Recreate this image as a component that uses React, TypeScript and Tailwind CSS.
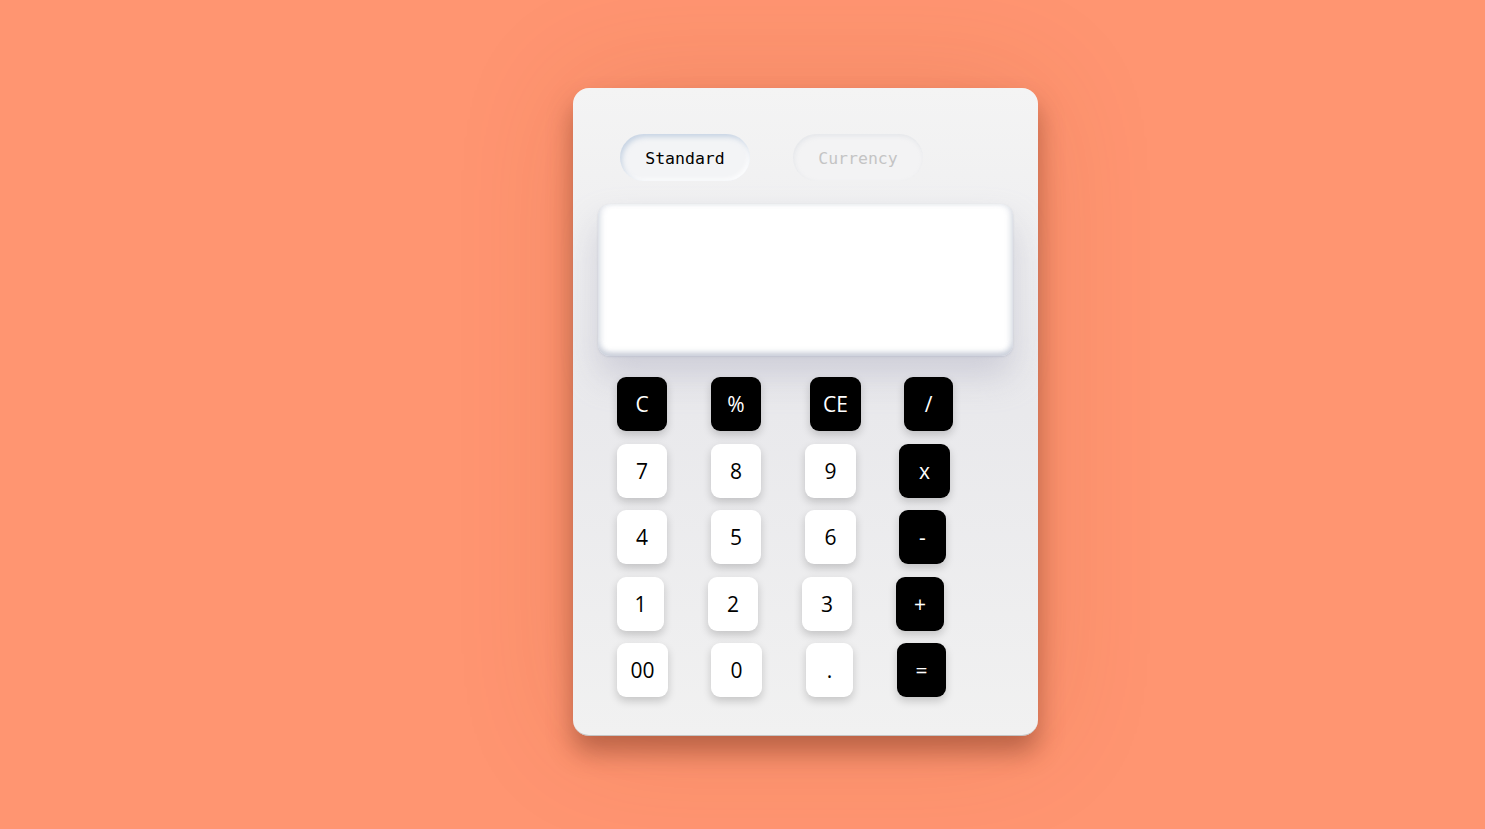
const rows = [
  [
    { t: "C", w: "w-[50px]", ml: "ml-0", dark: true },
    { t: "%", w: "w-[50px]", ml: "ml-[44px]", dark: true },
    { t: "CE", w: "w-[51px]", ml: "ml-[49px]", dark: true },
    { t: "/", w: "w-[49px]", ml: "ml-[43px]", dark: true },
  ],
  [
    { t: "7", w: "w-[50px]", ml: "ml-0", dark: false },
    { t: "8", w: "w-[50px]", ml: "ml-[44px]", dark: false },
    { t: "9", w: "w-[51px]", ml: "ml-[44px]", dark: false },
    { t: "x", w: "w-[51px]", ml: "ml-[43px]", dark: true },
  ],
  [
    { t: "4", w: "w-[50px]", ml: "ml-0", dark: false },
    { t: "5", w: "w-[50px]", ml: "ml-[44px]", dark: false },
    { t: "6", w: "w-[51px]", ml: "ml-[44px]", dark: false },
    { t: "-", w: "w-[47px]", ml: "ml-[43px]", dark: true },
  ],
  [
    { t: "1", w: "w-[47px]", ml: "ml-0", dark: false },
    { t: "2", w: "w-[50px]", ml: "ml-[44px]", dark: false },
    { t: "3", w: "w-[50px]", ml: "ml-[44px]", dark: false },
    { t: "+", w: "w-[48px]", ml: "ml-[44px]", dark: true },
  ],
  [
    { t: "00", w: "w-[51px]", ml: "ml-0", dark: false },
    { t: "0", w: "w-[51px]", ml: "ml-[43px]", dark: false },
    { t: ".", w: "w-[47px]", ml: "ml-[44px]", dark: false },
    { t: "=", w: "w-[49px]", ml: "ml-[44px]", dark: true },
  ],
];

export default function App() {
  return (
    <main className="bg-[#ff9571] min-h-screen w-full flex justify-center pl-[126px] pt-[88px]">
      <div className="w-[465px] h-[648px] rounded-[16px] bg-gradient-to-b from-[#f4f4f4] via-[#e9e9ec] to-[#f1f1f1] border-b border-[#c4c4c4] shadow-[0_16px_26px_rgba(110,45,25,0.45),0_0_120px_rgba(150,60,30,0.15)] flex flex-col">
        {/* tabs */}
        <div className="flex pt-[46px] pl-[47px] gap-[43px] font-['DejaVu_Sans_Mono',monospace] text-[16.5px]">
          <div className="w-[130px] h-[47px] pt-[3px] rounded-full bg-[#f3f4f6] flex items-center justify-center text-black shadow-[inset_2px_3px_5px_rgba(170,190,215,0.6),inset_-2px_-2px_4px_rgba(255,255,255,0.9)]">
            Standard
          </div>
          <div className="w-[130px] h-[47px] pt-[3px] rounded-full bg-[#f3f3f4] flex items-center justify-center text-[#c4c4c4] shadow-[inset_1px_2px_4px_rgba(200,205,215,0.35)]">
            Currency
          </div>
        </div>

        {/* display */}
        <div className="mx-[25px] mt-[23px] h-[152px] rounded-[12px] bg-white shadow-[inset_0_-4px_5px_rgba(195,200,212,0.8),inset_4px_0_5px_rgba(225,228,235,0.6),inset_-4px_0_5px_rgba(225,228,235,0.6),0_1px_2px_rgba(180,185,200,0.6),0_20px_34px_rgba(170,170,190,0.45)]" />

        {/* keys */}
        <div className="flex flex-col gap-[12.5px] pl-[44px] mt-[21px] font-['Comic_Sans_MS','Open_Sans',sans-serif] text-[21px]">
          {rows.map((row, i) => (
            <div key={i} className="flex h-[54px]">
              {row.map((b) => (
                <button
                  key={b.t}
                  className={`${b.w} ${b.ml} h-[54px] pt-[2px] rounded-[9px] flex items-center justify-center shadow-[0_4px_8px_rgba(0,0,0,0.18)] ${
                    b.dark ? "bg-black text-white" : "bg-white text-black"
                  }`}
                >
                  {b.t}
                </button>
              ))}
            </div>
          ))}
        </div>
      </div>
    </main>
  );
}
